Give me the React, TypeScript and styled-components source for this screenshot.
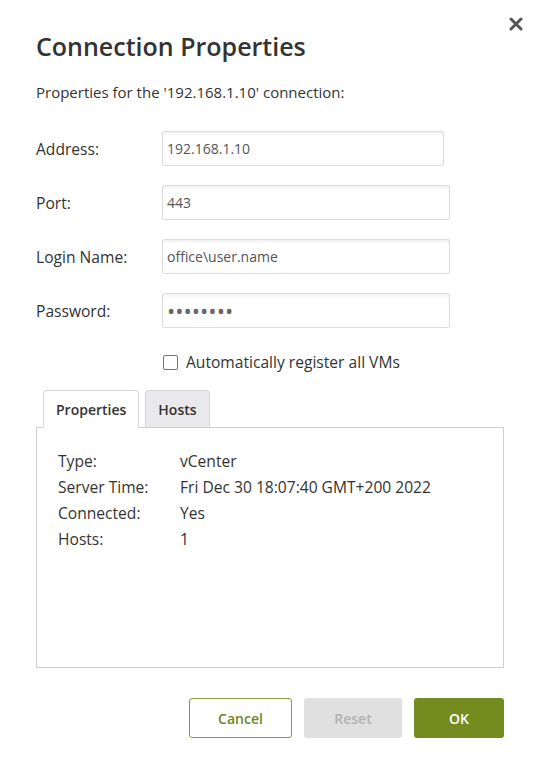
import React from "react";
import styled, { createGlobalStyle } from "styled-components";

const GlobalStyle = createGlobalStyle`
  body {
    margin: 0;
    background: #ffffff;
    font-family: "Open Sans", "Noto Sans", sans-serif;
    color: #333333;
  }
`;

const Dialog = styled.div`
  position: relative;
  width: 540px;
  height: 769px;
  box-sizing: border-box;
  padding: 30px 36px 0 36px;
  background: #ffffff;
  display: flex;
  flex-direction: column;
`;

const CloseButton = styled.button`
  position: absolute;
  top: 14px;
  right: 14px;
  width: 20px;
  height: 20px;
  padding: 0;
  border: none;
  background: transparent;
  cursor: pointer;
  display: flex;
  align-items: center;
  justify-content: center;
`;

const Title = styled.h1`
  margin: 0;
  font-size: 25px;
  line-height: 32px;
  font-weight: 600;
  color: #333333;
`;

const Subtitle = styled.p`
  margin: 20px 0 0;
  font-size: 15px;
  line-height: 20px;
  color: #333333;
`;

const Form = styled.div`
  margin-top: 29px;
  display: grid;
  grid-template-columns: 126px 1fr;
  row-gap: 19px;
  align-items: center;
`;

const Label = styled.label`
  font-size: 15.6px;
  color: #333333;
`;

const Input = styled.input<{ $width: number }>`
  width: ${({ $width }) => $width}px;
  height: 35px;
  box-sizing: border-box;
  border: 1px solid #dcdcdc;
  border-radius: 2px;
  padding: 0 4px;
  font-family: "Open Sans", sans-serif;
  font-size: 14px;
  color: #555555;
  box-shadow: inset 0 3px 4px -2px rgba(0, 0, 0, 0.09);
  outline: none;
`;

const PasswordInput = styled(Input)`
  font-size: 22px;
  color: #666666;
  padding-bottom: 2px;
`;

const CheckRow = styled.label`
  margin: 23px 0 0 127px;
  display: flex;
  align-items: center;
  gap: 8px;
  font-size: 15.6px;
  color: #333333;
`;

const CheckBox = styled.span`
  width: 13px;
  height: 13px;
  border: 1px solid #767676;
  border-radius: 2px;
  background: #ffffff;
`;

const Tabs = styled.div`
  margin-top: 17px;
  display: flex;
  align-items: flex-end;
  gap: 6px;
  padding-left: 7px;
`;

const Tab = styled.div<{ $active?: boolean }>`
  box-sizing: border-box;
  padding: 0 12px;
  display: flex;
  align-items: center;
  font-size: 14px;
  font-weight: 600;
  color: #333333;
  border: 1px solid #d6d6d6;
  border-bottom: none;
  border-radius: 4px 4px 0 0;
  background: ${({ $active }) => ($active ? "#ffffff" : "#e9e9eb")};
  margin-bottom: ${({ $active }) => ($active ? "-1px" : "0")};
  height: ${({ $active }) => ($active ? "38px" : "37px")};
  position: relative;
  z-index: 1;
`;

const Panel = styled.div`
  height: 241px;
  box-sizing: border-box;
  border: 1px solid #cfcfcf;
  padding: 20px 21px;
  display: grid;
  grid-template-columns: 122px 1fr;
  grid-auto-rows: 26px;
  align-content: start;
  align-items: center;
  font-size: 15.6px;
  color: #333333;
`;

const Footer = styled.div`
  margin-top: 30px;
  display: flex;
  justify-content: flex-end;
  gap: 12px;
`;

const Button = styled.button<{ $variant: "outline" | "disabled" | "primary" }>`
  height: 40px;
  border-radius: 3px;
  font-family: "Open Sans", sans-serif;
  font-size: 14px;
  font-weight: 600;
  cursor: pointer;
  box-sizing: border-box;
  ${({ $variant }) =>
    $variant === "outline"
      ? `width: 103px; background: #ffffff; border: 1px solid #8a9a3c; color: #6f8520;`
      : $variant === "disabled"
      ? `width: 98px; background: #e0e0e0; border: none; color: #b3b3b3; cursor: default;`
      : `width: 90px; background: #748b20; border: none; color: #ffffff;`}
`;

const details = [
  ["Type:", "vCenter"],
  ["Server Time:", "Fri Dec 30 18:07:40 GMT+200 2022"],
  ["Connected:", "Yes"],
  ["Hosts:", "1"],
];

export default function App() {
  return (
    <>
      <GlobalStyle />
      <Dialog>
        <CloseButton aria-label="Close">
          <svg width="14" height="14" viewBox="0 0 14 14">
            <path
              d="M2 2 L12 12 M12 2 L2 12"
              stroke="#555555"
              strokeWidth="3"
              strokeLinecap="round"
            />
          </svg>
        </CloseButton>
        <Title>Connection Properties</Title>
        <Subtitle>Properties for the '192.168.1.10' connection:</Subtitle>
        <Form>
          <Label>Address:</Label>
          <Input $width={282} defaultValue="192.168.1.10" />
          <Label>Port:</Label>
          <Input $width={288} defaultValue="443" />
          <Label>Login Name:</Label>
          <Input $width={288} defaultValue="office\user.name" />
          <Label>Password:</Label>
          <PasswordInput $width={288} readOnly defaultValue="••••••••" />
        </Form>
        <CheckRow>
          <CheckBox />
          Automatically register all VMs
        </CheckRow>
        <Tabs>
          <Tab $active>Properties</Tab>
          <Tab>Hosts</Tab>
        </Tabs>
        <Panel>
          {details.map(([k, v]) => (
            <React.Fragment key={k}>
              <span>{k}</span>
              <span>{v}</span>
            </React.Fragment>
          ))}
        </Panel>
        <Footer>
          <Button $variant="outline">Cancel</Button>
          <Button $variant="disabled">Reset</Button>
          <Button $variant="primary">OK</Button>
        </Footer>
      </Dialog>
    </>
  );
}
